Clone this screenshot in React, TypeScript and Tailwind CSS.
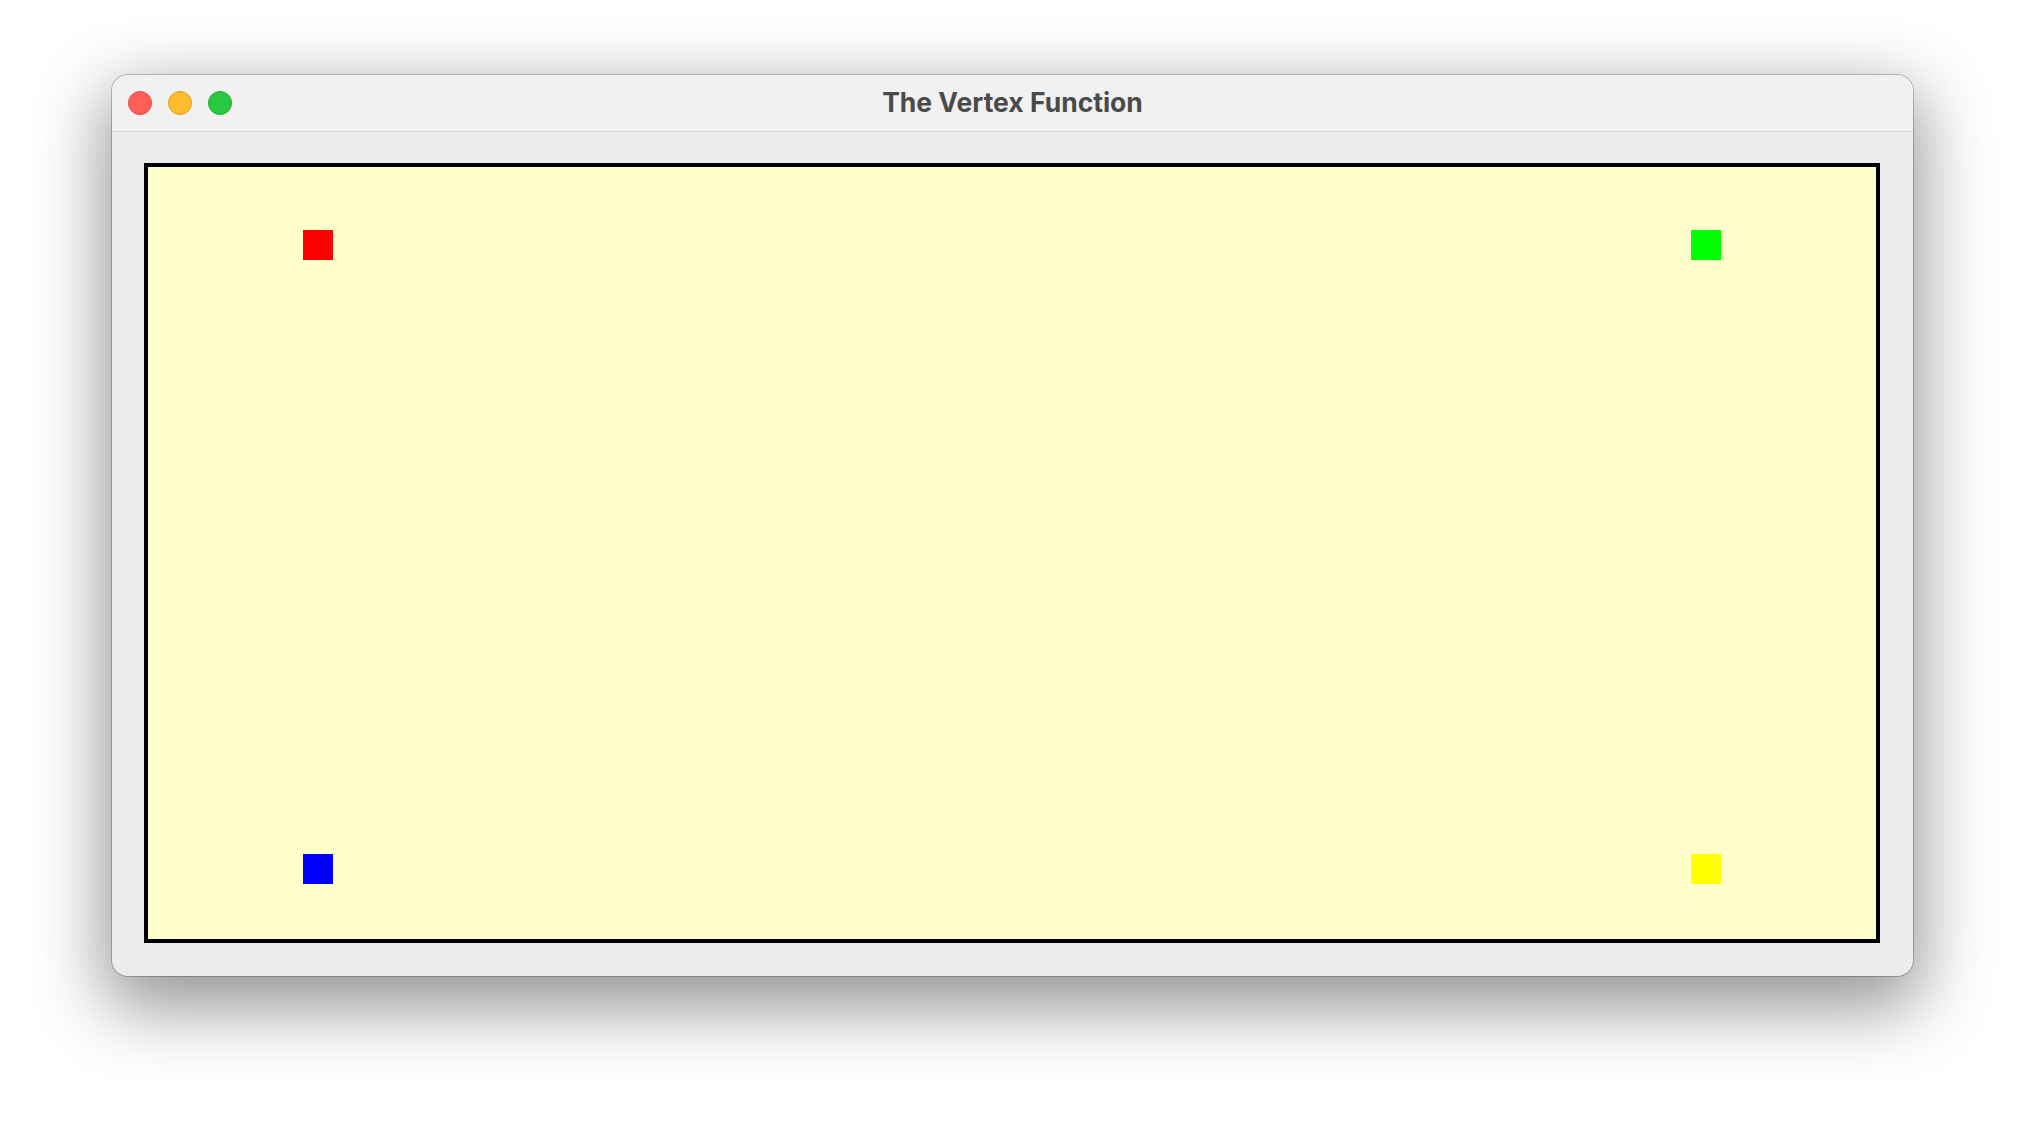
import React from 'react';

const Vertex: React.FC<{ className: string }> = ({ className }) => (
  <div className={`absolute w-[30px] h-[30px] ${className}`} />
);

const App: React.FC = () => {
  return (
    <div className="min-h-[1124px] w-[2024px] bg-white pl-[112px] pt-[75px] font-['Inter','Noto_Sans',sans-serif]">
      <div className="w-[1801px] h-[901px] rounded-[16px] bg-[#ececec] shadow-[0_24px_70px_8px_rgba(0,0,0,0.42),0_0_0_1px_rgba(0,0,0,0.22)] flex flex-col overflow-hidden">
        <div className="relative h-[57px] shrink-0 bg-[#f1f1f1] border-b border-[#d0d0d0] flex items-center justify-center">
          <div className="absolute left-[16px] top-[16px] flex gap-[16px]">
            <span className="w-[24px] h-[24px] rounded-full bg-[#ff5f57] border border-[#e2463f]" />
            <span className="w-[24px] h-[24px] rounded-full bg-[#febc2e] border border-[#e1a116]" />
            <span className="w-[24px] h-[24px] rounded-full bg-[#28c840] border border-[#14ae2a]" />
          </div>
          <span className="text-[26.5px] font-bold text-[#4a4a4a]">The Vertex Function</span>
        </div>
        <div className="flex-1 p-[32px] pt-[31px]">
          <div className="relative w-[1736px] h-[780px] border-4 border-black bg-[#ffffcc]">
            <Vertex className="left-[155px] top-[63px] bg-[#ff0000]" />
            <Vertex className="right-[155px] top-[63px] bg-[#00ff00]" />
            <Vertex className="left-[155px] bottom-[55px] bg-[#0000ff]" />
            <Vertex className="right-[155px] bottom-[55px] bg-[#ffff00]" />
          </div>
        </div>
      </div>
    </div>
  );
};

export default App;
